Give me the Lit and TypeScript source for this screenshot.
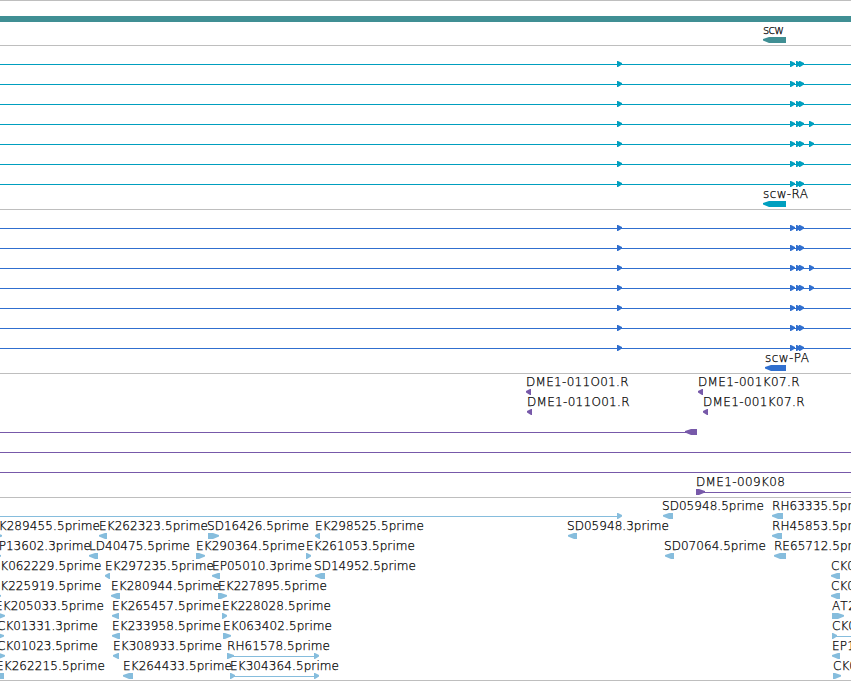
import { LitElement, css, html, svg, nothing } from 'lit';
import { customElement, property } from 'lit/decorators.js';

type Shape = 'left' | 'right' | 'band' | 'line';

interface Feature {
  row: number;
  shape: Shape;
  start: number;
  end: number;
  label?: string;
  labelAt?: number;
  labelWidth?: number;
}

interface Track {
  name: string;
  height: number;
  pitch: number;
  features: Feature[];
}

const WIDTH = 851;
const FIRST_ROW = 18;
const HEAD = 6;
const EXON = 5;

const feature = (
  row: number,
  shape: Shape,
  start: number,
  end: number,
  label?: string,
  labelAt?: number,
  labelWidth?: number,
): Feature => ({ row, shape, start, end, label, labelAt, labelWidth });

// isoforms that share the same exons, the rows in longRows have one more
const isoforms = (longRows: number[]): Feature[] =>
  [0, 1, 2, 3, 4, 5, 6].flatMap((row) => {
    const exons = [617, 790, 796, 799];
    if (longRows.includes(row)) exons.push(809);
    return [
      feature(row, 'line', 0, WIDTH),
      ...exons.map((x) => feature(row, 'right', x, x + EXON)),
    ];
  });

const tracks: Track[] = [
  {
    name: 'gene',
    height: 44,
    pitch: 21,
    features: [
      feature(0, 'band', 0, WIDTH),
      feature(1, 'left', 763, 786, 'scw', 763, 21),
    ],
  },
  {
    name: 'transcript',
    height: 163,
    pitch: 20,
    features: [
      ...isoforms([3, 4]),
      feature(7, 'left', 763, 786, 'scw-RA', 763, 45),
    ],
  },
  {
    name: 'protein',
    height: 163,
    pitch: 20,
    features: [
      ...isoforms([2, 3]),
      feature(7, 'left', 765, 786, 'scw-PA', 765, 44),
    ],
  },
  {
    name: 'bac',
    height: 123,
    pitch: 20,
    features: [
      feature(0, 'left', 526, 531, 'DME1-011O01.R', 526, 102.5),
      feature(0, 'left', 698, 703, 'DME1-001K07.R', 698, 101.5),
      feature(1, 'left', 527, 532, 'DME1-011O01.R', 527, 102.5),
      feature(1, 'left', 703, 708, 'DME1-001K07.R', 703, 101.5),
      feature(2, 'line', 0, 688),
      feature(2, 'left', 685, 697),
      feature(3, 'line', 0, WIDTH),
      feature(4, 'line', 0, WIDTH),
      feature(5, 'line', 700, WIDTH),
      feature(5, 'right', 696, 705, 'DME1-009K08', 696, 89),
    ],
  },
  {
    name: 'est',
    height: 182,
    pitch: 20,
    features: [
      feature(0, 'line', 0, 618),
      feature(0, 'right', 617, 622),
      feature(0, 'left', 663, 673, 'SD05948.5prime', 662, 102),
      feature(0, 'left', 772, 783, 'RH63335.5prime', 772, 103),

      feature(1, 'right', -8, 2, 'EK289455.5prime', -9, 109),
      feature(1, 'left', 99, 107, 'EK262323.5prime', 99, 109),
      feature(1, 'right', 208, 219, 'SD16426.5prime', 207, 102),
      feature(1, 'left', 315, 320, 'EK298525.5prime', 315, 109),
      feature(1, 'left', 568, 577, 'SD05948.3prime', 567, 102),
      feature(1, 'left', 772, 782, 'RH45853.5prime', 772, 103),

      feature(2, 'right', -8, 1, 'EP13602.3prime', -9, 100),
      feature(2, 'left', 89, 98, 'LD40475.5prime', 89, 101),
      feature(2, 'right', 196, 205, 'EK290364.5prime', 196, 109),
      feature(2, 'right', 306, 311, 'EK261053.5prime', 306, 109),
      feature(2, 'left', 665, 674, 'SD07064.5prime', 664, 102),
      feature(2, 'left', 774, 786, 'RE65712.5prime', 774, 101),

      feature(3, 'left', 105, 110, 'EK297235.5prime', 105, 109),
      feature(3, 'left', 212, 220, 'EP05010.3prime', 212, 100),
      feature(3, 'left', 315, 325, 'SD14952.5prime', 314, 102),
      feature(3, 'left', 831, 840, 'CK0', 831, 24),
      feature(3, 'right', -9, 0, 'EK062229.5prime', -7.5, 109),

      feature(4, 'right', -8, 1, 'EK225919.5prime', -7.5, 109),
      feature(4, 'left', 111, 120, 'EK280944.5prime', 111, 109),
      feature(4, 'right', 218, 227, 'EK227895.5prime', 218, 109),
      feature(4, 'left', 831, 840, 'CK0', 831, 24),

      feature(5, 'right', -6, 5, 'EK205033.5prime', -5, 109),
      feature(5, 'left', 112, 119, 'EK265457.5prime', 112, 109),
      feature(5, 'right', 222, 227, 'EK228028.5prime', 222, 109),
      feature(5, 'right', 832, 844, 'AT2', 832, 24),

      feature(6, 'right', -6, 4, 'CK01331.3prime', -3, 101),
      feature(6, 'left', 112, 120, 'EK233958.5prime', 112, 109),
      feature(6, 'right', 223, 231, 'EK063402.5prime', 223, 109),
      feature(6, 'line', 834, WIDTH),
      feature(6, 'right', 832, 837, 'CK0', 832, 24),

      feature(7, 'right', -6, 5, 'CK01023.5prime', -3, 101),
      feature(7, 'left', 113, 119, 'EK308933.5prime', 113, 109),
      feature(7, 'line', 229, 315),
      feature(7, 'right', 314, 319),
      feature(7, 'right', 227, 234, 'RH61578.5prime', 227, 103),
      feature(7, 'left', 832, 840, 'EP1', 832, 23),

      feature(8, 'left', -6, 4, 'EK262215.5prime', -4, 109),
      feature(8, 'left', 123, 133, 'EK264433.5prime', 123, 109),
      feature(8, 'line', 232, 315),
      feature(8, 'right', 314, 319),
      feature(8, 'right', 230, 235, 'EK304364.5prime', 230, 109),
      feature(8, 'right', 833, 841, 'CK0', 833, 24),
    ],
  },
];

@customElement('browser-track')
class BrowserTrack extends LitElement {
  static styles = css`
  :host {
    display: block;
    border-top: 1px solid #bebebe;
  }

  svg {
    display: block;
    overflow: hidden;
  }

  .glyph {
    fill: currentColor;
  }

  .label {
    fill: #000;
    stroke: #000;
    stroke-width: 0.25px;
    font-family: "DejaVu Sans Light", "DejaVu Sans", sans-serif;
    font-weight: 200;
    font-size: 12px;
  }

  .gene { color: #408f94; }
  .transcript { color: #009fbf; }
  .protein { color: #306fcf; }
  .bac { color: #7759a9; }
  .est { color: #86bddd; }
  `;

  @property({ attribute: false }) track!: Track;

  renderGlyph(f: Feature, y: number) {
    const { start, end } = f;
    if (f.shape === 'line' || f.shape === 'band') {
      const thin = f.shape === 'line';
      return svg`<rect class="glyph" x=${start} y=${thin ? y : y - 3}
        width=${end - start} height=${thin ? 1 : 6}></rect>`;
    }
    const head = Math.min(HEAD, end - start - 1);
    const [tip, tail, neck] = f.shape === 'left'
      ? [start, end, start + head]
      : [end, start, end - head];
    const points = `${tail},${y - 3} ${neck},${y - 3} ${tip},${y - 1} ${tip},${y + 0.5} ${neck},${y + 3} ${tail},${y + 3}`;
    return svg`<polygon class="glyph" points=${points}></polygon>`;
  }

  renderFeature(f: Feature) {
    const y = FIRST_ROW + f.row * this.track.pitch;
    return svg`
      ${this.renderGlyph(f, y)}
      ${f.label
        ? svg`<text class="label" x=${f.labelAt} y=${y - 6} textLength=${f.labelWidth}>${f.label}</text>`
        : nothing}
    `;
  }

  render() {
    const { name, height, features } = this.track;
    return html`
    <svg class=${name} width=${WIDTH} height=${height}>
      ${features.map((f) => this.renderFeature(f))}
    </svg>
    `;
  }
}

@customElement('app-root')
class AppRoot extends LitElement {
  static styles = css`
  :host {
    display: block;
    width: 851px;
    background: #fff;
  }

  .tracks {
    display: flex;
    flex-direction: column;
    border-bottom: 1px solid #bebebe;
    overflow: hidden;
  }
  `;

  render() {
    return html`
    <div class="tracks">
      ${tracks.map((track) => html`<browser-track .track=${track}></browser-track>`)}
    </div>
    `;
  }
}

export { AppRoot, BrowserTrack };
